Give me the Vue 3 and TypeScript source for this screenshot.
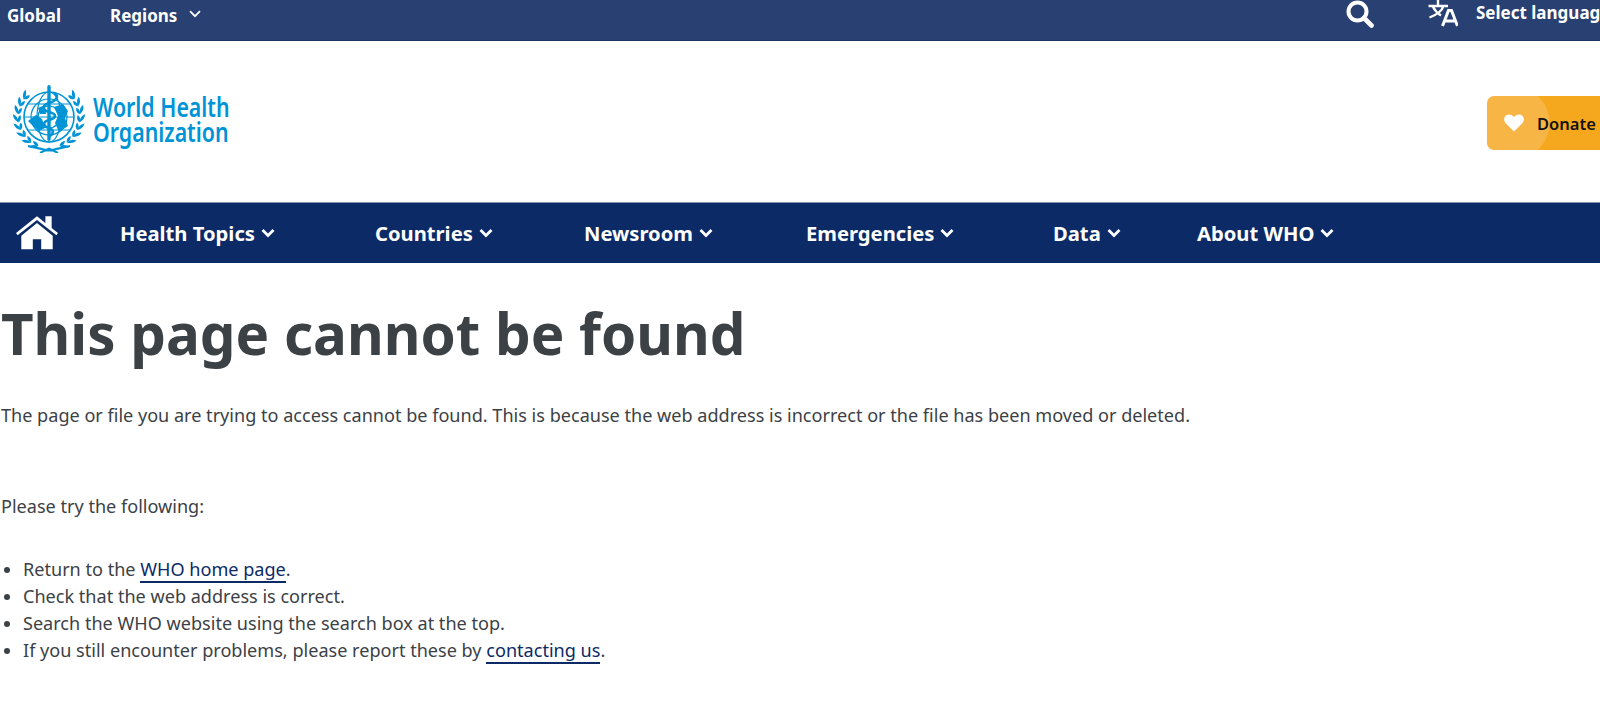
<template>
  <div class="page">
    <div class="top-bar">
      <div class="top-left">
        <a class="top-link">Global</a>
        <a class="top-link regions">
          Regions
          <svg class="top-chevron" viewBox="0 0 12 8" width="12" height="8">
            <path d="M1 1.200 6 6.200 11 1.200" fill="none" stroke="#fff" stroke-width="1.700" />
          </svg>
        </a>
      </div>
      <div class="top-right">
        <svg class="search-icon" viewBox="0 0 28 28" width="28" height="28">
          <circle cx="11.500" cy="11.500" r="9" fill="none" stroke="#fff" stroke-width="4" />
          <path d="M18 18 25.500 25.500" stroke="#fff" stroke-width="4.600" stroke-linecap="round" />
        </svg>
        <svg class="translate-icon" viewBox="0 0 30 27" width="30" height="27">
          <path d="M.5 6H20M10 0V6M15.500 6C14 11 8 15 1.500 17.500M4.500 6C6.500 10 9 13 13 15.500" fill="none" stroke="#fff" stroke-width="2.400" />
          <path d="M14.500 26 20.500 10.500H23.500L29.500 26M17 21H27" fill="none" stroke="#fff" stroke-width="3" />
        </svg>
        <span class="language">Select language</span>
      </div>
    </div>

    <header class="brand-row">
      <a class="logo">
        <svg class="emblem" viewBox="0 0 76 68" width="76" height="68">
          <g fill="none" stroke="#0093d5">
            <circle cx="38" cy="32" r="25" stroke-width="1.600" />
            <circle cx="38" cy="32" r="18" stroke-width="1.200" />
            <circle cx="38" cy="32" r="11" stroke-width="1.200" />
            <ellipse cx="38" cy="32" rx="12" ry="25" stroke-width="1.200" />
            <path d="M13 32H63M17 19H59M17 45H59" stroke-width="1.200" />
          </g>
          <g fill="#0093d5">
            <rect x="36.300" y="0" width="3.400" height="56" rx="1.700" />
            <path d="M17 36 25 30 31 34 34 43 28 46 22 41Z" />
            <path d="M43 22 52 19 57 26 54 33 57 41 48 47 44 38 47 31Z" />
            <path d="M27 23 34 20 35 29 29 29Z" />
          </g>
          <path d="M43 8C49 11 45 16 38 18 30 21 31 25 38 27 46 29 46 33 38 35 31 37 32 41 38 43 43 45 43 48 39 51" fill="none" stroke="#0093d5" stroke-width="2.600" />
          <g fill="#0093d5">
            <path v-for="leaf in leaves" :key="leaf" :d="leaf" />
          </g>
          <path d="M17 61C26 63 33 64.500 38 65.500 43 64.500 50 63 59 61M29 68 38 63.500 47 68" fill="none" stroke="#0093d5" stroke-width="2" />
        </svg>
        <div class="wordmark">
          <span>World Health</span>
          <span>Organization</span>
        </div>
      </a>
      <a class="donate">
        <svg class="heart" viewBox="0 0 20 18" width="20" height="18">
          <path d="M10 17.500 2 9.600C-.6 7-.4 3.200 2 1.400 4.500-.4 8 .3 10 3 12 .3 15.500-.4 18 1.400 20.400 3.200 20.600 7 18 9.600Z" fill="#fff" />
        </svg>
        <span>Donate</span>
      </a>
    </header>

    <nav class="main-nav">
      <svg class="home" viewBox="0 0 42 34" width="44" height="36">
        <path d="M1 18 21 2 29 8.500V2H35V13.300L41 18 39.500 20 21 5.500 2.500 20Z" fill="#fff" />
        <path d="M6 20.500 21 8.500 36 20.500V33.500H25V24H17V33.500H6Z" fill="#fff" />
      </svg>
      <a v-for="item in navItems" :key="item.label" class="nav-item" :style="{ width: item.width + 'px' }">
        {{ item.label }}
        <svg viewBox="0 0 14 10" width="14" height="10">
          <path d="M1.500 2 7 7.500 12.500 2" fill="none" stroke="#fff" stroke-width="2.800" />
        </svg>
      </a>
    </nav>

    <main class="content">
      <h1>This page cannot be found</h1>
      <p class="lead">The page or file you are trying to access cannot be found. This is because the web address is incorrect or the file has been moved or deleted.</p>
      <p class="try">Please try the following:</p>
      <ul>
        <li>Return to the <a>WHO home page</a>.</li>
        <li>Check that the web address is correct.</li>
        <li>Search the WHO website using the search box at the top.</li>
        <li>If you still encounter problems, please report these by <a>contacting us</a>.</li>
      </ul>
    </main>
  </div>
</template>

<script setup lang="ts">
interface NavItem {
  label: string
  width: number
}

const navItems: NavItem[] = [
  { label: 'Health Topics', width: 255 },
  { label: 'Countries', width: 209 },
  { label: 'Newsroom', width: 222 },
  { label: 'Emergencies', width: 247 },
  { label: 'Data', width: 144 },
  { label: 'About WHO', width: 200 }
]

// laurel wreath: pairs of leaves along an arc round the globe, mirrored at x=38
const leafPath = (x: number, y: number, angle: number, length: number, width: number) => {
  const dx = Math.cos(angle)
  const dy = Math.sin(angle)
  const tipX = x + dx * length
  const tipY = y + dy * length
  const midX = x + dx * length * 0.5
  const midY = y + dy * length * 0.5
  return `M${x.toFixed(1)} ${y.toFixed(1)}Q${(midX - dy * width).toFixed(1)} ${(midY + dx * width).toFixed(1)} ${tipX.toFixed(1)} ${tipY.toFixed(1)}Q${(midX + dy * width).toFixed(1)} ${(midY - dx * width).toFixed(1)} ${x.toFixed(1)} ${y.toFixed(1)}Z`
}

const leaves: string[] = []
for (let i = 0; i < 8; i++) {
  // t runs from near the bottom, up the left side
  const t = ((20 + i * 15) * Math.PI) / 180
  const x = 38 - 31 * Math.sin(t)
  const y = 32 + 31 * Math.cos(t)
  const tangent = Math.atan2(-Math.sin(t), -Math.cos(t))
  const outer = tangent - 0.42
  const inner = tangent + 0.42
  for (const [angle, size] of [[outer, 10], [inner, 7.5]]) {
    leaves.push(leafPath(x, y, angle, size, 3))
    // mirror: the x part of the direction flips
    leaves.push(leafPath(76 - x, y, Math.PI - angle, size, 3))
  }
}
</script>

<style>
html,
body {
  margin: 0;
  background: #fff;
  overflow: hidden;
}
</style>

<style scoped>
.page {
  width: 1600px;
  height: 705px;
  overflow: hidden;
  font-family: "Noto Sans", sans-serif;
  color: #3c4146;
}

.top-bar {
  height: 40px;
  box-sizing: content-box;
  background: #284172;
  border-bottom: 1px solid #1d3563;
  display: flex;
  justify-content: space-between;
  color: #fff;
  font-weight: 700;
  font-size: 17px;
}

.top-left {
  display: flex;
  gap: 49px;
  padding: 4px 0 0 7px;
  line-height: 23px;
}

.regions {
  display: flex;
  align-items: center;
  gap: 12px;
  height: 23px;
}

.top-chevron {
  margin-top: -4px;
}

.top-right {
  display: flex;
  align-items: flex-start;
  width: 254px;
  flex: none;
  white-space: nowrap;
}

.top-right svg {
  flex: none;
}

.search-icon {
  margin: 0 54px 0 0;
}

.translate-icon {
  margin: 0 18px 0 0;
}

.language {
  line-height: 26px;
}

.brand-row {
  height: 161px;
  display: flex;
  justify-content: space-between;
  align-items: flex-start;
}

.logo {
  display: flex;
  margin: 44px 0 0 11px;
  gap: 6px;
}

.wordmark {
  display: flex;
  flex-direction: column;
  margin-top: 9px;
  width: 137px;
  color: #0093d5;
  font-size: 27px;
  line-height: 25px;
  font-weight: 600;
}

.wordmark span {
  white-space: nowrap;
  width: max-content;
  transform: scaleX(0.79);
  transform-origin: left center;
}

.donate {
  margin-top: 55px;
  width: 113px;
  height: 54px;
  box-sizing: border-box;
  padding-left: 17px;
  display: flex;
  align-items: center;
  gap: 13px;
  border-radius: 7px 0 0 7px;
  background: radial-gradient(circle at 26px 27px, #f6b545 36px, #f5a81e 37px);
  color: #111;
  font-weight: 600;
  font-size: 16.500px;
}

.main-nav {
  height: 61px;
  background: #0b2a66;
  border-top: 1px solid #8592ad;
  box-sizing: border-box;
  display: flex;
  align-items: center;
  color: #fff;
  font-weight: 700;
  font-size: 20.200px;
}

.home {
  margin: -2px 61px 0 15px;
  flex: none;
}

.nav-item {
  display: flex;
  align-items: center;
  gap: 6px;
  flex: none;
  white-space: nowrap;
}

.content {
  padding-left: 1px;
}

h1 {
  margin: 32px 0 0;
  font-size: 56.500px;
  line-height: 78px;
  font-weight: 700;
}

.lead {
  margin: 29px 0 0;
  font-size: 18.080px;
  line-height: 27px;
}

.try {
  margin: 64px 0 0;
  font-size: 18.080px;
  line-height: 27px;
}

ul {
  margin: 36px 0 0;
  padding: 0 0 0 22px;
  font-size: 18.080px;
  line-height: 27px;
}

li a {
  color: #0b2a66;
  border-bottom: 2px solid #0b2a66;
}
</style>
